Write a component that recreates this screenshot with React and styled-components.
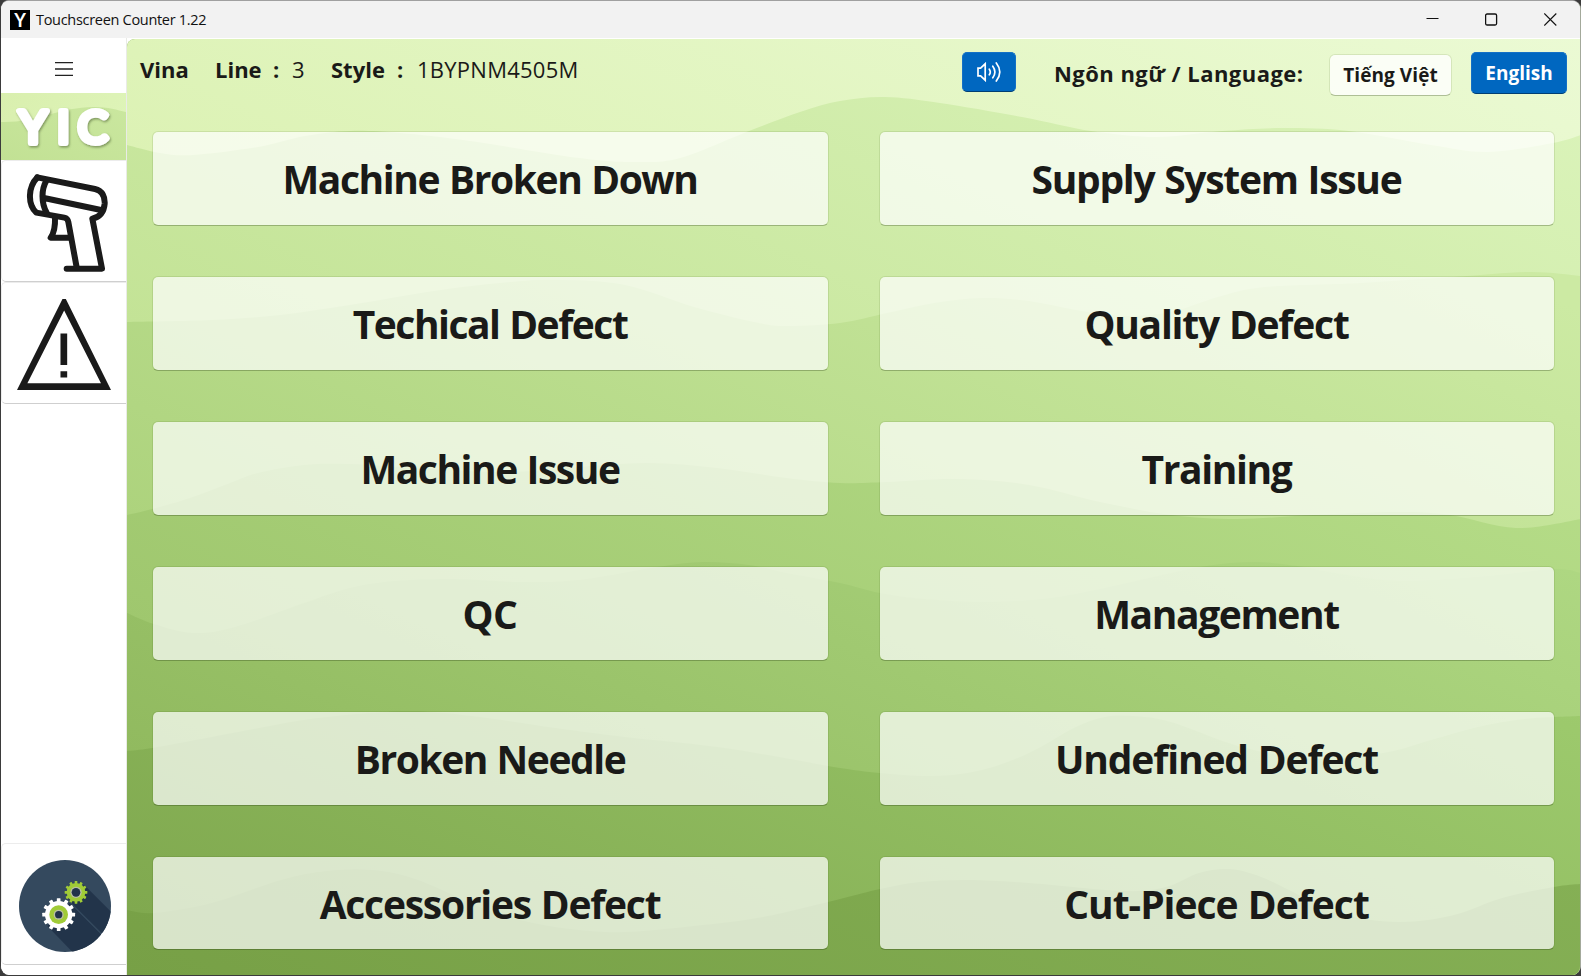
import React from "react";
import styled, { createGlobalStyle, css } from "styled-components";

const GlobalStyle = createGlobalStyle`
  * { box-sizing: border-box; }
  html, body { margin: 0; padding: 0; }
  body {
    width: 1581px;
    height: 976px;
    overflow: hidden;
    background: #3b3b3b;
    font-family: "Open Sans", "Noto Sans", sans-serif;
    color: #1a1a18;
  }
  button { font: inherit; color: inherit; margin: 0; padding: 0; cursor: pointer; }
`;

const AppWindow = styled.div`
  width: 1581px;
  height: 975px;
  display: flex;
  flex-direction: column;
  overflow: hidden;
  border: solid;
  border-width: 1px 1px 0 1px;
  border-color: #a0a0a0 #a3a99b #3b3b3b #3b3b3b;
  border-radius: 9px;
  background: #fff;
`;

const TitleBar = styled.header`
  height: 37px;
  flex: none;
  display: flex;
  align-items: center;
  justify-content: space-between;
  padding: 0 23px 0 9px;
  background: #f2f2f2;
`;

const TitleGroup = styled.div`
  display: flex;
  align-items: center;
  gap: 6px;
`;

const AppBadge = styled.span`
  width: 20px;
  height: 20px;
  display: flex;
  align-items: center;
  justify-content: center;
  background: #000;
  color: #fff;
  font: 700 18px/20px "Lato", sans-serif;
`;

const Title = styled.span`
  font-size: 14.5px;
  line-height: 20px;
  letter-spacing: ${(p) => p.$spacing}px;
  color: #111;
  white-space: nowrap;
`;

const WindowControls = styled.div`
  display: flex;
  align-items: center;
  gap: 46px;
  svg { display: block; }
`;

const Body = styled.div`
  flex: 1;
  display: flex;
  min-height: 0;
`;

const Sidebar = styled.nav`
  width: 126px;
  flex: none;
  display: flex;
  flex-direction: column;
  background: #fff;
  border-right: 1px solid #e9ebe6;
`;

const MenuButton = styled.button`
  height: 55px;
  flex: none;
  border: 0;
  background: none;
  display: flex;
  align-items: center;
  justify-content: center;
  padding: 7px 0 0 1px;
`;

const Brand = styled.div`
  height: 67px;
  flex: none;
  svg { display: block; }
`;

const NavItem = styled.button`
  height: 122px;
  margin-top: ${(p) => (p.$bottom ? "auto" : "0")};
  margin-bottom: ${(p) => (p.$bottom ? "10px" : "0")};
  flex: none;
  display: flex;
  align-items: center;
  justify-content: center;
  padding: ${(p) => p.$inset};
  background: #fff;
  border: solid #ececec;
  border-width: 1px 0 1px 1px;
  border-bottom-color: #cfcfcf;
  border-radius: 5px 0 0 5px;
  svg { display: block; }
`;

const Main = styled.main`
  flex: 1;
  position: relative;
  margin-top: 1px;
  display: flex;
  flex-direction: column;
  overflow: hidden;
  border-top-left-radius: 8px;
  background: #7ba44a;
`;

const Backdrop = styled.svg`
  position: absolute;
  inset: 0;
`;

const Toolbar = styled.div`
  position: relative;
  height: 92px;
  flex: none;
  display: flex;
  align-items: flex-start;
  justify-content: space-between;
  padding: 13px 13px 0 13px;
`;

const Facts = styled.div`
  display: flex;
  padding-top: 2px;
  font-size: 22px;
  line-height: 30px;
  white-space: nowrap;
`;

const Fact = styled.span`
  width: ${(p) => p.$width}px;
  font-weight: ${(p) => (p.$strong ? 700 : 400)};
  letter-spacing: ${(p) => p.$spacing || 0}px;
`;

const Actions = styled.div`
  display: flex;
  align-items: flex-start;
`;

const LanguageLabel = styled.span`
  width: 275px;
  margin-left: 38px;
  padding-top: 6px;
  font-size: 22px;
  line-height: 30px;
  font-weight: 700;
  letter-spacing: ${(p) => p.$spacing}px;
  white-space: nowrap;
`;

const surface = css`
  border: 1px solid rgba(40, 70, 0, 0.1);
  border-bottom-color: rgba(20, 40, 0, 0.27);
  background: rgba(255, 255, 255, 0.71);
  background-clip: padding-box;
  border-radius: 6px;
`;

const accent = css`
  border: 1px solid #1470c6;
  border-bottom-color: #003e73;
  background: #0067c0;
  border-radius: 5px;
  color: #fff;
`;

const ToolButton = styled.button`
  ${(p) => (p.$accent ? accent : surface)}
  ${(p) => !p.$accent && "background-color: rgba(255, 255, 255, 0.8);"}
  width: ${(p) => p.$width}px;
  height: ${(p) => p.$height}px;
  margin-top: ${(p) => p.$drop || 0}px;
  margin-right: ${(p) => p.$after || 0}px;
  display: flex;
  align-items: center;
  justify-content: center;
  font-size: 19px;
  font-weight: 700;
  line-height: 26px;
  letter-spacing: ${(p) => p.$spacing || 0}px;
  white-space: nowrap;
`;

const IssueGrid = styled.div`
  position: relative;
  display: grid;
  grid-template-columns: 677px 676px;
  grid-template-rows: repeat(5, 95px) 94px;
  gap: 50px;
  padding: 0 25px;
`;

const IssueButton = styled.button`
  ${surface}
  display: flex;
  align-items: center;
  justify-content: center;
  padding: 1px 1px 0 0;
  font-size: 39px;
  font-weight: 700;
  line-height: 52px;
  letter-spacing: ${(p) => p.$spacing}px;
  word-spacing: 1px;
  white-space: nowrap;
`;

/* Each hill: crest points, lower-left colour, upper-right colour. */
const HILLS = [
  {
    from: "#c3e396", to: "#daf3b9", base: 322,
    crest: [[127,145],[160,153],[193,155],[258,147],[305,136],[350,131],[400,133],[470,141],[579,158],[634,162],[680,158],[749,131],[800,112],[840,101],[885,97],[940,103],[1022,117],[1091,131],[1157,137],[1222,131],[1283,128],[1349,131],[1431,145],[1488,152],[1553,143],[1581,135]],
  },
  {
    from: "#add37d", to: "#cceaa3", base: 515,
    crest: [[127,322],[212,320],[280,315],[350,305],[441,290],[510,282],[561,280],[625,285],[694,307],[754,322],[786,326],[840,323],[887,313],[934,303],[982,298],[1029,301],[1076,310],[1123,316],[1171,312],[1218,297],[1265,287],[1360,283],[1454,277],[1530,272],[1581,276]],
  },
  {
    from: "#9fc76e", to: "#b7de8a", base: 620,
    crest: [[127,515],[152,509],[190,498],[230,483],[258,473],[304,465],[350,464],[430,469],[510,472],[579,467],[648,463],[717,468],[786,478],[840,483],[887,482],[958,479],[1029,485],[1100,502],[1171,515],[1237,519],[1313,515],[1398,512],[1450,515],[1516,528],[1581,519]],
  },
  {
    from: "#91ba5f", to: "#afd883", base: 751,
    crest: [[127,613],[154,624],[193,633],[235,627],[304,603],[350,588],[395,581],[455,579],[519,582],[579,580],[657,567],[703,562],[749,565],[786,573],[840,583],[880,593],[925,599],[982,602],[1043,599],[1095,590],[1171,573],[1213,565],[1256,562],[1298,566],[1336,573],[1398,581],[1478,577],[1554,569],[1581,573]],
  },
  {
    from: "#80a94f", to: "#9dca6d", base: 910,
    crest: [[127,751],[152,748],[212,737],[304,720],[372,713],[428,712],[487,718],[556,728],[625,737],[717,747],[790,759],[840,768],[880,773],[934,776],[982,770],[1029,753],[1076,727],[1105,717],[1133,716],[1171,722],[1242,747],[1313,759],[1383,753],[1431,740],[1478,727],[1525,719],[1581,716]],
  },
  {
    from: "#77a046", to: "#87b257", base: 975,
    crest: [[127,910],[154,913],[212,903],[281,880],[327,871],[372,870],[418,880],[487,910],[533,923],[579,930],[625,932],[694,926],[763,917],[840,899],[880,889],[920,882],[968,880],[1029,883],[1124,891],[1166,887],[1199,873],[1228,869],[1256,875],[1289,890],[1336,913],[1398,922],[1454,915],[1502,898],[1554,887],[1581,884]],
  },
];

const crestPath = (points) => {
  const at = (i) => points[Math.max(0, Math.min(points.length - 1, i))];
  let d = `M${points[0][0]} ${points[0][1]}`;
  for (let i = 0; i < points.length - 1; i++) {
    const [a, b, c, e] = [at(i - 1), at(i), at(i + 1), at(i + 2)];
    d += `C${b[0] + (c[0] - a[0]) / 6} ${b[1] + (c[1] - a[1]) / 6} ${c[0] - (e[0] - b[0]) / 6} ${c[1] - (e[1] - b[1]) / 6} ${c[0]} ${c[1]}`;
  }
  return d + "V976H127Z";
};

const Hills = () => (
  <Backdrop width="1453" height="936" viewBox="127 39 1453 936" aria-hidden="true">
    <defs>
      <linearGradient id="sky" gradientUnits="userSpaceOnUse" x1="127" y1="150" x2="427" y2="-500">
        <stop offset="0" stopColor="#dcf2b4" />
        <stop offset="1" stopColor="#ebfad4" />
      </linearGradient>
      {HILLS.map((h, i) => (
        <linearGradient key={i} id={`hill${i}`} gradientUnits="userSpaceOnUse" x1="127" y1={h.base} x2="460" y2={h.base - 722}>
          <stop offset="0" stopColor={h.from} />
          <stop offset="1" stopColor={h.to} />
        </linearGradient>
      ))}
    </defs>
    <rect x="127" y="39" width="1454" height="937" fill="url(#sky)" />
    {HILLS.map((h, i) => (
      <path key={i} d={crestPath(h.crest)} fill={`url(#hill${i})`} />
    ))}
  </Backdrop>
);

const BrandArt = () => (
  <svg width="125" height="67" viewBox="0 0 125 67">
    <defs>
      <linearGradient id="brandSky" x1="0" y1="0" x2="1" y2="0.4">
        <stop offset="0" stopColor="#d9efae" />
        <stop offset="1" stopColor="#def4b8" />
      </linearGradient>
      <linearGradient id="brandHill" x1="0" y1="1" x2="1" y2="0">
        <stop offset="0" stopColor="#c2e194" />
        <stop offset="1" stopColor="#cae79f" />
      </linearGradient>
      <filter id="brandShadow" x="-10%" y="-10%" width="120%" height="130%">
        <feDropShadow dx="1" dy="1.5" stdDeviation="0.9" floodColor="#4c6130" floodOpacity="0.6" />
      </filter>
    </defs>
    <rect width="125" height="67" fill="url(#brandSky)" />
    <path d="M0 29C35 30 60 14 92 14C108 14 116 17 125 19V67H0Z" fill="url(#brandHill)" />
    <text
      x="18 56 76.7" y="49.5"
      fontFamily="Lato, sans-serif" fontWeight="400" fontSize="45"
      fill="#fff" stroke="#fff" strokeWidth="6" strokeLinejoin="round"
      filter="url(#brandShadow)"
    >YIC</text>
  </svg>
);

const ScannerIcon = () => (
  <svg width="85" height="101" viewBox="75 50 255 303" fill="none" stroke="#1a1a1a" strokeWidth="18" strokeLinejoin="round" strokeLinecap="round">
    <path d="M112 66L285 101C308 106 315 126 314 145C312 169 299 185 277 190L306 340H200" />
    <path d="M112 66C84 95 82 146 109 172L193 187Q203 189 205 200L230 336" />
    <path d="M139 76C124 102 123 142 140 172M132 128L303 164" />
    <path d="M165 187C166 212 163 232 152 247H206" />
  </svg>
);

const AlertIcon = () => (
  <svg width="94" height="91" viewBox="51 432 281 272" fill="#1a1a1a">
    <path fillRule="evenodd" d="M187 432H197L332 704H51ZM192 466L82 684H302Z" />
    <path d="M181 535H201V629H181ZM181 648H201V667H181Z" />
  </svg>
);

const Gear = ({ x, y, r, tooth, teeth, fill }) => (
  <g fill={fill} transform={`translate(${x} ${y})`}>
    <circle r={r} />
    {Array.from({ length: teeth }, (_, i) => (
      <rect key={i} x={-tooth / 2} y={-r - tooth * 0.75} width={tooth} height={tooth * 1.4} rx="1.5" transform={`rotate(${(i * 360) / teeth})`} />
    ))}
  </g>
);

const SettingsIcon = () => (
  <svg width="92" height="92" viewBox="57 90 276 276">
    <clipPath id="disc"><circle cx="195" cy="228" r="138" /></clipPath>
    <circle cx="195" cy="228" r="138" fill="#34495e" />
    <g clipPath="url(#disc)" fill="#22344a">
      <path d="M252 164L400 312V404L205 209Z" />
      <path d="M209 219L400 410H260L142 288Z" />
      <path d="M216 224L304 312" stroke="#34495e" strokeWidth="2" />
    </g>
    <Gear x={228} y={187} r={28} tooth={8} teeth={12} fill="#a0cb37" />
    <circle cx="228" cy="187" r="17" fill="#b9bfa5" />
    <circle cx="228" cy="187" r="13" fill="#22344a" />
    <Gear x={176} y={254} r={41} tooth={11} teeth={12} fill="#fff" />
    <circle cx="176" cy="254" r="28" fill="#a0cb37" />
    <circle cx="176" cy="254" r="15" fill="#b9bfa5" />
    <circle cx="176" cy="254" r="11" fill="#22344a" />
  </svg>
);

const SoundIcon = () => (
  <svg width="26" height="22" viewBox="0 0 26 22" fill="none" stroke="#fff" strokeWidth="1.7" strokeLinecap="round" strokeLinejoin="miter">
    <path d="M2 7.2H4.6L9.2 2.8V19.2L4.6 14.8H2Z" />
    <path d="M13.3 8.2Q15.3 11 13.3 13.8M16.8 5.2Q21 11 16.8 16.8M20.3 2Q27.3 11 20.3 20" />
  </svg>
);

const ISSUES = [
  ["Machine Broken Down", -1.4], ["Supply System Issue", -1.3],
  ["Techical Defect", -1.48], ["Quality Defect", -1.22],
  ["Machine Issue", -1.46], ["Training", -1.4],
  ["QC", -0.5], ["Management", -1.4],
  ["Broken Needle", -1.46], ["Undefined Defect", -1.15],
  ["Accessories Defect", -1.25], ["Cut-Piece Defect", -1],
];

export default function App() {
  return (
    <>
      <GlobalStyle />
      <AppWindow>
        <TitleBar>
          <TitleGroup>
            <AppBadge>Y</AppBadge>
            <Title $spacing={-0.3}>Touchscreen Counter 1.22</Title>
          </TitleGroup>
          <WindowControls>
            <svg width="13" height="13" viewBox="0 0 13 13"><path d="M0.5 5.5H12.5" stroke="#111" /></svg>
            <svg width="13" height="13" viewBox="0 0 13 13"><rect x="0.6" y="1" width="11" height="11" rx="1.5" fill="none" stroke="#111" strokeWidth="1.3" /></svg>
            <svg width="13" height="13" viewBox="0 0 13 13"><path d="M0.3 0.5L12.3 12.5M12.3 0.5L0.3 12.5" stroke="#111" strokeWidth="1.1" /></svg>
          </WindowControls>
        </TitleBar>
        <Body>
          <Sidebar>
            <MenuButton aria-label="Menu">
              <svg width="18" height="14" viewBox="0 0 18 14"><path d="M0 0.5H18M0 7H18M0 13.5H18" stroke="#222" strokeWidth="1.3" /></svg>
            </MenuButton>
            <Brand><BrandArt /></Brand>
            <NavItem aria-label="Scanner" $inset="3px 0 0 7px"><ScannerIcon /></NavItem>
            <NavItem aria-label="Alerts" $inset="2px 0 0 0"><AlertIcon /></NavItem>
            <NavItem aria-label="Settings" $bottom $inset="3px 0 0 2px"><SettingsIcon /></NavItem>
          </Sidebar>
          <Main>
            <Hills />
            <Toolbar>
              <Facts>
                <Fact $strong $width={75}>Vina</Fact>
                <Fact $strong $width={58}>Line</Fact>
                <Fact $strong $width={19}>:</Fact>
                <Fact $width={39}>3</Fact>
                <Fact $strong $width={66}>Style</Fact>
                <Fact $strong $width={20}>:</Fact>
                <Fact $width={170} $spacing={0.25}>1BYPNM4505M</Fact>
              </Facts>
              <Actions>
                <ToolButton $accent $width={54} $height={40} aria-label="Sound"><SoundIcon /></ToolButton>
                <LanguageLabel $spacing={0.46}>Ngôn ngữ / Language:</LanguageLabel>
                <ToolButton $width={123} $height={42} $drop={2} $after={19} $spacing={0.08}>Tiếng Việt</ToolButton>
                <ToolButton $accent $width={96} $height={42}>English</ToolButton>
              </Actions>
            </Toolbar>
            <IssueGrid>
              {ISSUES.map(([label, spacing]) => (
                <IssueButton key={label} $spacing={spacing}>{label}</IssueButton>
              ))}
            </IssueGrid>
          </Main>
        </Body>
      </AppWindow>
    </>
  );
}
